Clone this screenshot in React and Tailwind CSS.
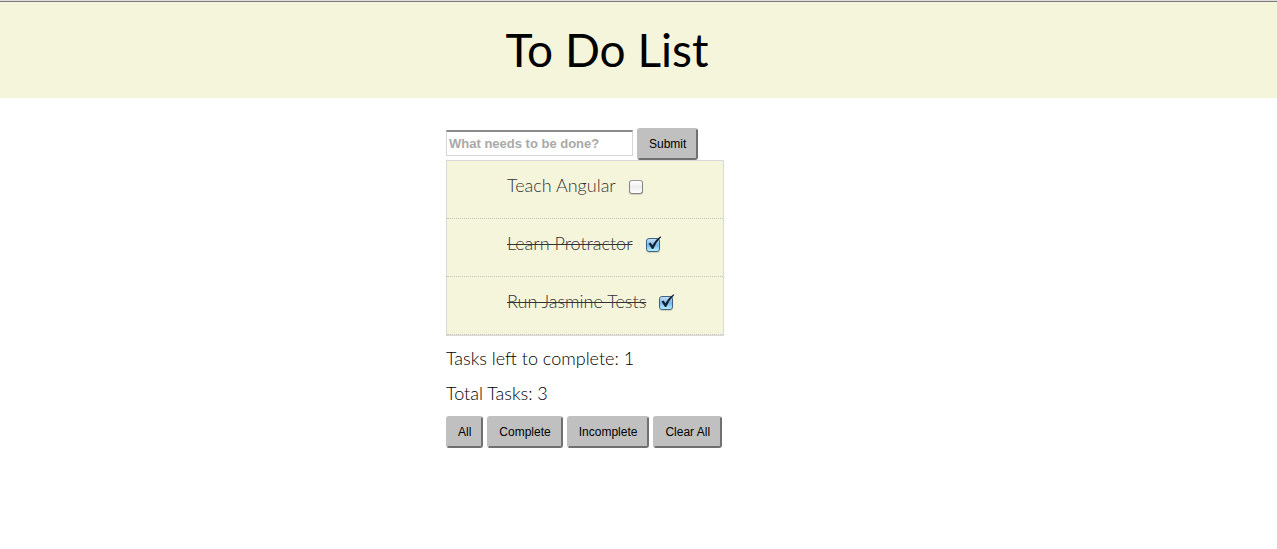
import { useState } from "react";

const initialTasks = [
  { id: 1, name: "Teach Angular", done: false },
  { id: 2, name: "Learn Protractor", done: true },
  { id: 3, name: "Run Jasmine Tests", done: true },
];

function Button({ children, ...props }) {
  return (
    <button
      className="h-8 whitespace-nowrap rounded-[3px] border-2 border-t-[#c0c0c0] border-l-[#c0c0c0] border-r-[#707070] border-b-[#707070] bg-[#c0c0c0] px-[10px] font-['Liberation_Sans',sans-serif] text-[12px] leading-4 text-black"
      {...props}
    >
      {children}
    </button>
  );
}

function Task({ task, onToggle }) {
  return (
    <li className="h-[58px] border-b border-dotted border-[#c4c4b8] pl-[60px] pt-3">
      <label className="flex items-center gap-[13px] text-[18px] leading-6 text-[#333333]">
        <span className={task.done ? "line-through decoration-1" : ""}>{task.name}</span>
        <span className="relative mt-[3px] h-[14px] w-[14px]">
          <input
            type="checkbox"
            checked={task.done}
            onChange={onToggle}
            className="block h-[14px] w-[14px] appearance-none rounded-[3px] border border-[#858585] border-t-[#9a9a9a] bg-linear-to-b from-white via-[#ededed] to-white shadow-[0_1px_1px_#00000026] checked:border-[#3f6287] checked:from-[#c5e0f7] checked:via-[#79b7ed] checked:to-[#b5f0ff]"
          />
          {task.done && (
            <svg
              viewBox="0 0 16 16"
              aria-hidden="true"
              className="pointer-events-none absolute -top-[2px] left-0 h-4 w-4"
            >
              <path d="M2.5 7.6 L4.4 6.4 L6.5 9.3 Q9.8 3.2 14.6 0.3 L15.2 1 Q10.4 6 7.2 13 L6 13 Z" fill="#142433" />
            </svg>
          )}
        </span>
      </label>
    </li>
  );
}

export default function App() {
  const [tasks, setTasks] = useState(initialTasks);
  const [filter, setFilter] = useState("all");
  const [draft, setDraft] = useState("");

  const visible = tasks.filter(
    (t) => filter === "all" || (filter === "complete" ? t.done : !t.done)
  );

  const addTask = (e) => {
    e.preventDefault();
    if (!draft.trim()) return;
    setTasks([...tasks, { id: Date.now(), name: draft.trim(), done: false }]);
    setDraft("");
  };

  const toggle = (id) =>
    setTasks(tasks.map((t) => (t.id === id ? { ...t, done: !t.done } : t)));

  return (
    <div className="bg-white font-['Lato',sans-serif] font-light text-black">
      <header className="border-t border-[#dcdcdc]">
        <div className="border-t border-[#7b7b7b] bg-[#f5f5dc] pt-4 pr-[63px] pb-4 text-center">
          <h1 className="text-[46px] leading-16 font-normal">To Do List</h1>
        </div>
      </header>
      <main className="flex justify-center pt-[30px] pr-[107px]">
        <div className="w-[278px]">
          <form onSubmit={addTask} className="flex items-start gap-1">
            <input
              type="text"
              aria-label="New task"
              placeholder="What needs to be done?"
              value={draft}
              onChange={(e) => setDraft(e.target.value)}
              className="mt-[2px] h-[26px] w-[187px] border border-[#d6d6d6] border-t-2 border-t-[#8a8a8a] bg-white px-[2px] font-['Liberation_Sans',sans-serif] text-[13px] font-bold placeholder:text-[#a9a9a9]"
            />
            <Button type="submit">Submit</Button>
          </form>
          <ul className="border border-[#d9d9d9] bg-[#f5f5dc]">
            {visible.map((t) => (
              <Task key={t.id} task={t} onToggle={() => toggle(t.id)} />
            ))}
          </ul>
          <p className="mt-[10px] text-[18px] leading-6">
            Tasks left to complete: {tasks.filter((t) => !t.done).length}
          </p>
          <p className="mt-[11px] text-[18px] leading-6">Total Tasks: {tasks.length}</p>
          <div className="mt-[11px] flex gap-1">
            <Button type="button" onClick={() => setFilter("all")}>All</Button>
            <Button type="button" onClick={() => setFilter("complete")}>Complete</Button>
            <Button type="button" onClick={() => setFilter("incomplete")}>Incomplete</Button>
            <Button type="button" onClick={() => setTasks([])}>Clear All</Button>
          </div>
        </div>
      </main>
    </div>
  );
}
